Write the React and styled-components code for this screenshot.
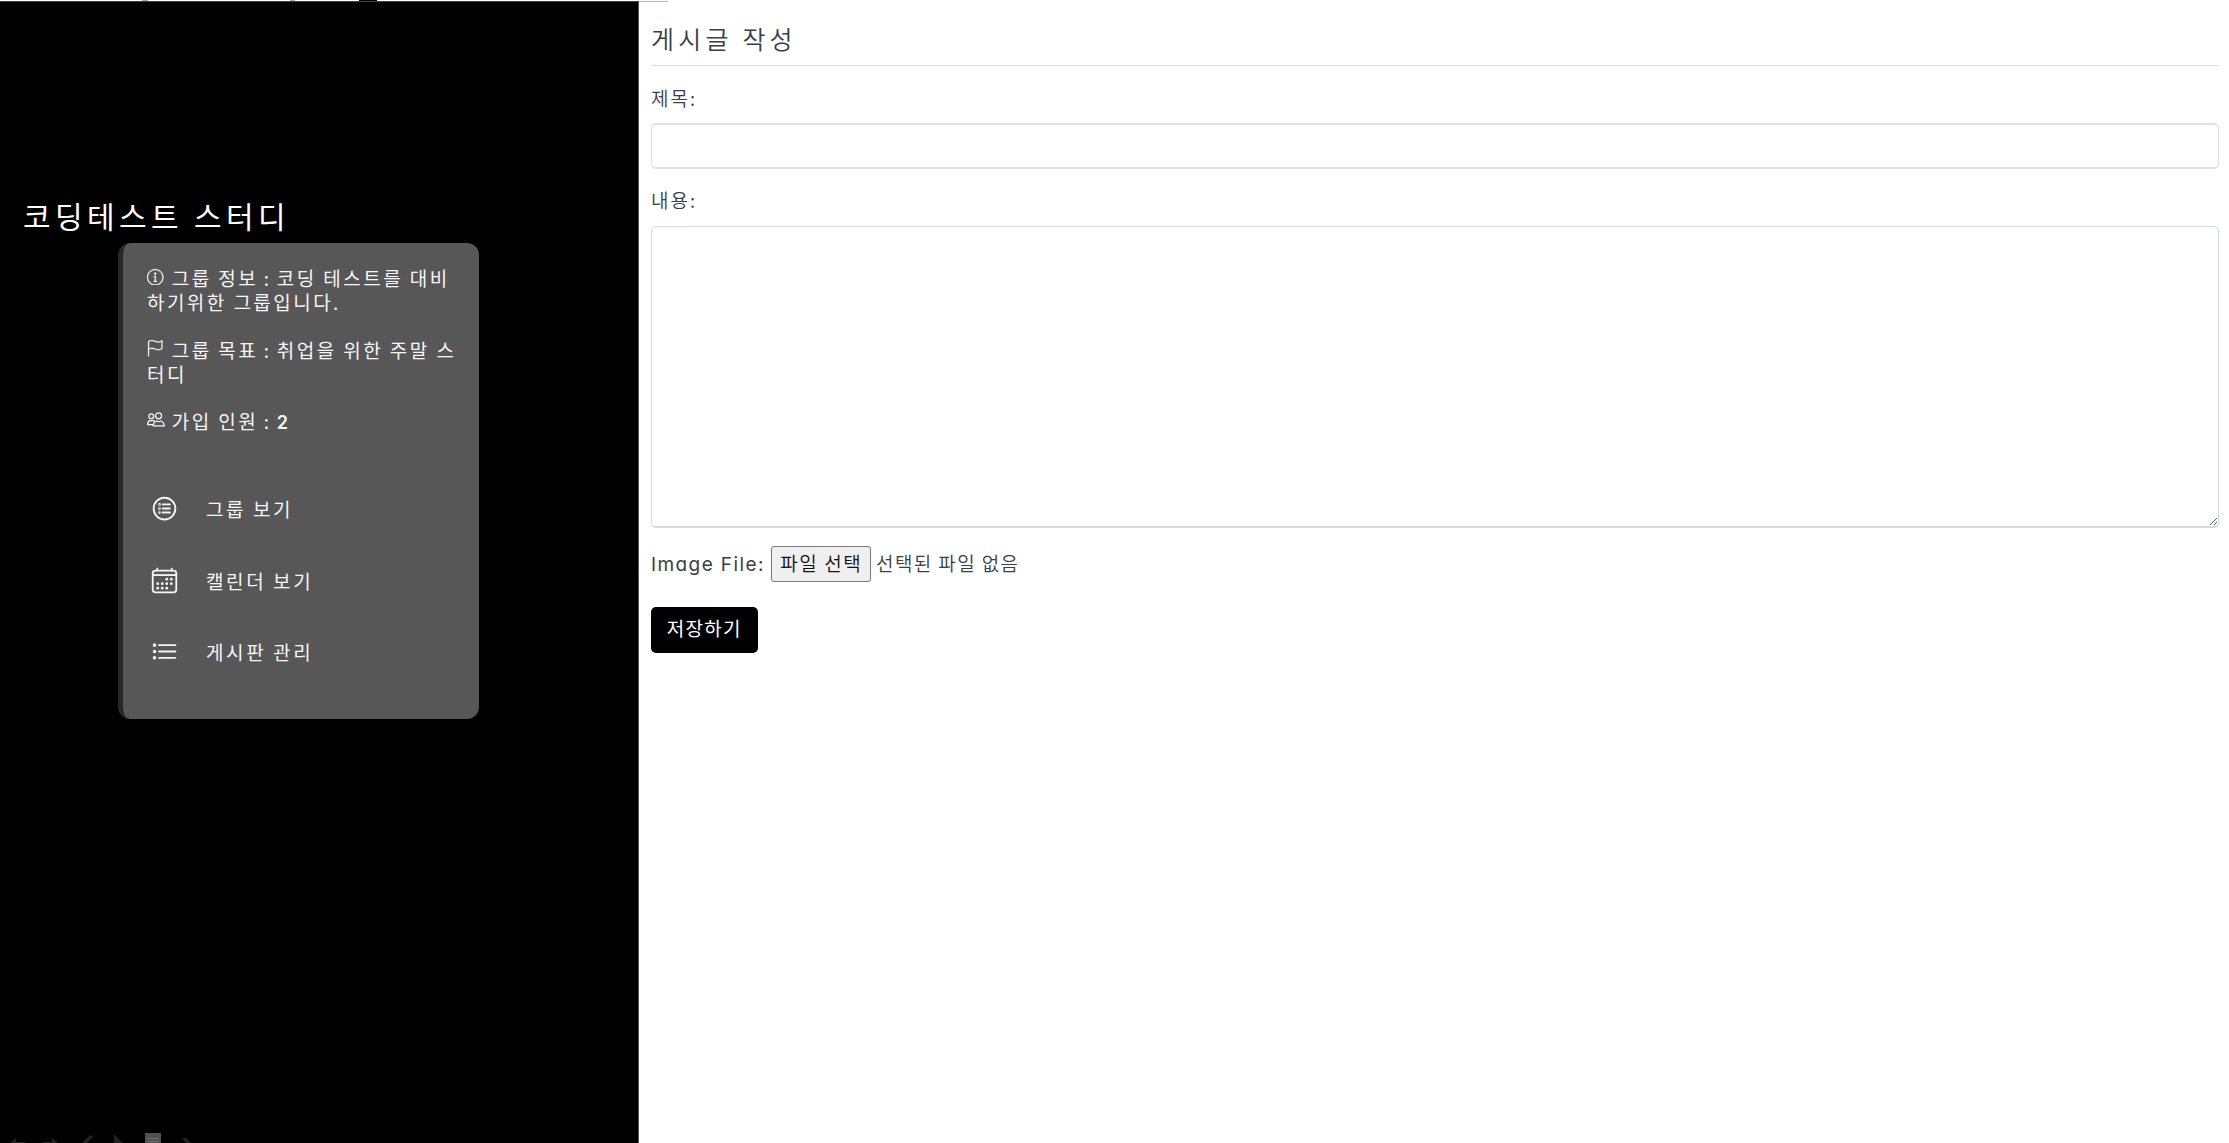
import React from "react";
import styled, { createGlobalStyle } from "styled-components";
import { SlInfo, SlFlag } from "react-icons/sl";
import { IoListCircleOutline, IoCalendarOutline, IoListOutline } from "react-icons/io5";

const GlobalStyle = createGlobalStyle`
  *, *::before, *::after { box-sizing: border-box; }
  body {
    margin: 0;
    background: #fff;
    font-family: "Noto Sans CJK KR", sans-serif;
    overflow: hidden;
  }
  h1, h2, p { margin: 0; font-weight: 400; }
`;

const Page = styled.div`
  display: grid;
  grid-template-columns: 639px 1fr;
  grid-template-rows: 1px 1fr;
  height: 1143px;
`;

const TopEdge = styled.div`
  grid-column: 1 / -1;
  display: flex;
  background: #fff;
`;

const EdgeMark = styled.i`
  width: ${(p) => p.$width}px;
  height: 1px;
  margin-left: ${(p) => p.$gap}px;
  background: ${(p) => p.$color};
`;

const Sidebar = styled.aside`
  position: relative;
  display: flex;
  flex-direction: column;
  background: #000;
  border-top: 1px solid #3c4042;
  border-right: 1px solid #555;
  color: #fff;
`;

const GroupTitle = styled.h1`
  padding: 192.5px 0 0 23px;
  height: 241px;
  font-size: 30px;
  line-height: 40px;
  letter-spacing: 4.4px;
  white-space: nowrap;
`;

const Card = styled.section`
  width: 361.5px;
  height: 476px;
  margin-left: 117.5px;
  padding: 23px 20px 0 24.5px;
  border-left: 5px solid #282828;
  border-radius: 12px;
  background: #575757;
  color: #f6f6f6;
`;

const Info = styled.p`
  margin-bottom: 23.5px;
  font-size: 19px;
  line-height: 24px;
  letter-spacing: 2.45px;
  font-weight: 400;
  white-space: nowrap;

  svg {
    width: 16.5px;
    height: 16.5px;
    margin-right: 8.3px;
    vertical-align: 1px;
    stroke: currentColor;
    stroke-width: 14px;
  }
`;

const Colon = styled.span`
  margin: 0 -1.3px;
`;

const Digit = styled.span`
  font-family: Inter, sans-serif;
  font-weight: 600;
  font-size: 18px;
`;

const Members = styled.svg`
  && {
    width: 18px;
    height: 16px;
    margin-right: 6.8px;
    fill: none;
    stroke: currentColor;
    stroke-width: 1.3px;
  }
`;

const Menu = styled.nav`
  display: flex;
  flex-direction: column;
  margin-top: 38px;
`;

const MenuItem = styled.a`
  display: flex;
  align-items: center;
  gap: 27px;
  height: 71.5px;
  padding-left: 3px;
  font-size: 19px;
  letter-spacing: 2.6px;

  svg {
    width: 29px;
    height: 29px;
    flex: none;
  }
`;

const BottomMarks = styled.svg`
  position: absolute;
  left: 0;
  bottom: 0;
  width: 240px;
  height: 12px;
`;

const Main = styled.main`
  display: flex;
  flex-direction: column;
  align-items: flex-start;
  padding: 0 10px 0 12px;
  color: #393f45;
  font-weight: 350;
`;

const TabEdge = styled.div`
  width: 29px;
  height: 1px;
  margin-left: -12px;
  background: #b9b9b9;
`;

const Heading = styled.h2`
  width: 100%;
  height: 64px;
  padding-top: 16px;
  border-bottom: 1px solid #dee0e2;
  font-size: 25px;
  font-weight: 350;
  line-height: 40px;
  letter-spacing: 4.2px;
`;

const Label = styled.label`
  height: 28px;
  font-size: 19px;
  line-height: 25px;
  letter-spacing: 2px;
  margin-top: ${(p) => p.$top}px;
`;

const TextInput = styled.input`
  width: 100%;
  height: 46px;
  margin-top: 10px;
  border: solid #dee2e6;
  border-width: 2px 1px;
  border-radius: 5px;
  background: #fff;
`;

const TextArea = styled.textarea`
  display: block;
  width: 100%;
  height: 302px;
  margin-top: 10.5px;
  border: solid #d6dade;
  border-width: 1px 1px 2px;
  border-radius: 5px;
  background: #fff;
`;

const FileRow = styled.div`
  display: flex;
  align-items: center;
  height: 36px;
  margin-top: 18.5px;
`;

const FileLabel = styled.span`
  width: 120px;
  font-family: Inter, sans-serif;
  font-feature-settings: "cv11";
  font-size: 19px;
  font-weight: 380;
  letter-spacing: 1.4px;
  white-space: nowrap;
`;

const FileButton = styled.button`
  width: 99.5px;
  height: 36px;
  padding: 0 0 3px 1px;
  border: 1px solid #7a7a7a;
  border-radius: 3px;
  background: #efefef;
  color: #111;
  font: 350 19px/30px "Noto Sans CJK KR", sans-serif;
  letter-spacing: 1.6px;
  white-space: nowrap;
`;

const FileStatus = styled.span`
  margin-left: 5.5px;
  padding-bottom: 3px;
  font-size: 19px;
  line-height: 30px;
  letter-spacing: 1.4px;
  white-space: nowrap;
`;

const SaveButton = styled.button`
  width: 106.5px;
  height: 46px;
  margin-top: 25px;
  padding: 0 0 4px;
  border: 0;
  border-radius: 5px;
  background: #000;
  color: #fff;
  font: 400 19px/30px "Noto Sans CJK KR", sans-serif;
  letter-spacing: 1.3px;
`;

const menu = [
  { icon: IoListCircleOutline, text: "그룹 보기" },
  { icon: IoCalendarOutline, text: "캘린더 보기" },
  { icon: IoListOutline, text: "게시판 관리" },
];

export default function App() {
  return (
    <>
      <GlobalStyle />
      <Page>
        <TopEdge>
          <EdgeMark $gap={142} $width={6} $color="#aaa" />
          <EdgeMark $gap={142} $width={5} $color="#aaa" />
          <EdgeMark $gap={64} $width={18} $color="#000" />
        </TopEdge>
        <Sidebar>
          <GroupTitle>코딩테스트 스터디</GroupTitle>
          <Card>
            <Info>
              <SlInfo />그룹 정보 <Colon>:</Colon> 코딩 테스트를 대비<br />하기위한 그룹입니다.
            </Info>
            <Info>
              <SlFlag />그룹 목표 <Colon>:</Colon> 취업을 위한 주말 스<br />터디
            </Info>
            <Info>
              <Members viewBox="0 0 18 16">
                <circle cx="4.3" cy="4.3" r="2.4" />
                <circle cx="11.6" cy="3.8" r="3" />
                <path d="M6.2 13.8c.1-3 1.4-4.1 3.3-4.8 1.4.8 2.8.8 4.2 0 2.2.7 3.4 1.9 3.5 4.8z" />
                <path d="M6 12.6H.7c0-2.6.8-3.6 2.3-4.2 1.1.5 2 .5 3 0 .8.2 1.3.6 1.7 1.1" />
              </Members>
              가입 인원 <Colon>:</Colon> <Digit>2</Digit>
            </Info>
            <Menu>
              {menu.map(({ icon: Icon, text }) => (
                <MenuItem key={text}>
                  <Icon />
                  {text}
                </MenuItem>
              ))}
            </Menu>
          </Card>
          <BottomMarks viewBox="0 0 240 12" fill="#222">
            <path d="M10 12 16 7v4h9v1z" />
            <path d="M58 12 52 7v4h-9v1z" />
            <path d="M83 11 90 4l3 2-6 6h-5z" />
            <path d="M114 3v9h9z" />
            <path d="M145 2h16v10h-16z" fill="#505050" />
            <path d="M147 7.5h12M147 10.5h12" stroke="#707070" />
            <path d="M182 7h4l5 5h-5z" />
          </BottomMarks>
        </Sidebar>
        <Main>
          <TabEdge />
          <Heading>게시글 작성</Heading>
          <Label $top={19}>제목:</Label>
          <TextInput />
          <Label $top={18}>내용:</Label>
          <TextArea />
          <FileRow>
            <FileLabel>Image File:</FileLabel>
            <FileButton>파일 선택</FileButton>
            <FileStatus>선택된 파일 없음</FileStatus>
          </FileRow>
          <SaveButton>저장하기</SaveButton>
        </Main>
      </Page>
    </>
  );
}
